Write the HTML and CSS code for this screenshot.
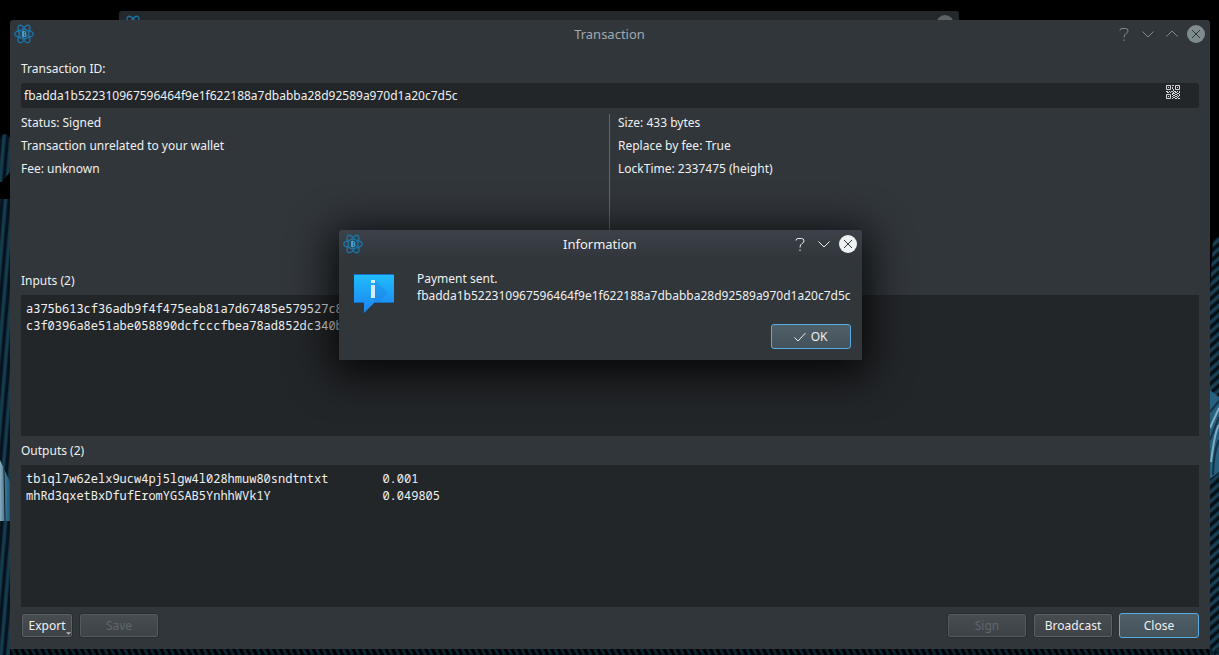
FILE: index.html
```html
<!DOCTYPE html>
<html lang="en">
<head>
<meta charset="utf-8">
<title>Transaction</title>
<link rel="stylesheet" href="styles.css">
</head>
<body>
<svg class="defs" width="0" height="0" aria-hidden="true">
  <defs>
    <pattern id="stripe-l" width="7" height="60" patternUnits="userSpaceOnUse" patternTransform="rotate(5)"><rect width="7" height="60" fill="#06131c"/><rect width="4" height="60" fill="#10303f"/><rect x="1" width="2" height="60" fill="#153c50"/></pattern>
    <pattern id="stripe-r" width="6" height="7" patternUnits="userSpaceOnUse" patternTransform="rotate(-42)"><rect width="6" height="7" fill="#050f16"/><rect width="6" height="4" fill="#12303f"/><rect y="1" width="6" height="2" fill="#194257"/></pattern>
    <pattern id="stripe-b" width="6" height="7" patternUnits="userSpaceOnUse" patternTransform="rotate(-25)"><rect width="3" height="7" fill="#0a2431"/></pattern>
    <linearGradient id="glow" x1="0" x2="1" y1="0" y2="0"><stop offset="0" stop-color="#8aa9b8"/><stop offset=".5" stop-color="#3c7797"/><stop offset="1" stop-color="#1f5672"/></linearGradient>
    <linearGradient id="bubble" x1="0" x2="0" y1="0" y2="1"><stop offset="0" stop-color="#21bdfb"/><stop offset="1" stop-color="#1b82f1"/></linearGradient>
    <symbol id="atom" viewBox="0 0 20 20">
      <g fill="none" stroke="#1b76a8" stroke-width="1.300">
        <ellipse cx="10" cy="10" rx="9.300" ry="4"/>
        <ellipse cx="10" cy="10" rx="9.800" ry="4" transform="rotate(60 10 10)"/>
        <ellipse cx="10" cy="10" rx="9.800" ry="4" transform="rotate(120 10 10)"/>
      </g>
      <circle cx="10" cy="10" r="4.800" fill="#28465a" stroke="#1b76a8"/>
      <path d="M8.500 7.500v5h2q1.500 0 1.500-1.300t-1.500-1.200h-2h1.800q1.400 0 1.400-1.200t-1.400-1.300zM9.500 6.500v7" fill="none" stroke="#4a9cc8" stroke-width="1.100"/>
    </symbol>
  </defs>
</svg>
<div class="desktop">
  <svg class="wallpaper" aria-hidden="true">
    <svg x="0" width="10" height="100%">
      <path d="M0 138Q5 130 10 138V172L2 182H0zM0 199H10V800H0z" fill="url(#stripe-l)"/>
      <path d="M0 460L10 482V521H0z" fill="url(#glow)"/><path d="M4 468L5 521" stroke="#0a1c28" stroke-width="1"/>
    </svg>
    <svg x="100%" width="10" height="100%" overflow="visible">
      <g transform="translate(-9 0)">
        <path d="M3 240L9 236V800H0V290z" fill="url(#stripe-r)"/>
        <path d="M0 390L9 397V472L0 479z" fill="#28607f"/><path d="M1 462Q5 430 9 425M0 428L9 408" stroke="#83abc0" stroke-width="2" fill="none"/><path d="M3 475Q4 450 9 440M0 440L9 417M0 412L9 401" stroke="#123549" stroke-width="2" fill="none"/>
      </g>
    </svg>
    <svg y="100%" width="100%" height="6" overflow="visible"><rect x="10" y="-6" width="100%" height="6" fill="url(#stripe-b)"/></svg>
  </svg>
  <div class="back-window" aria-hidden="true"><svg class="logo"><use href="#atom"/></svg><span class="back-close"></span></div>

  <main class="window">
    <header class="titlebar">
      <svg class="logo" aria-hidden="true"><use href="#atom"/></svg>
      <h1>Transaction</h1>
      <div class="controls">
        <button aria-label="Help"><svg viewBox="0 0 18 18"><path d="M5 5.500Q5 3.500 7 3.500H10.500Q13 3.500 13 6Q13 7.500 11 8.500Q9 9.500 9 12.500M9 14.500v1.500"/></svg></button>
        <button aria-label="Minimize"><svg viewBox="0 0 18 18"><path d="M3.500 6.500L9 12l5.500-5.500"/></svg></button>
        <button aria-label="Maximize"><svg viewBox="0 0 18 18"><path d="M3.500 11.500L9 6l5.500 5.500"/></svg></button>
        <button aria-label="Close window"><svg viewBox="0 0 18 18"><circle cx="9" cy="9" r="9"/><path class="cross" d="M5 5l8 8M13 5l-8 8"/></svg></button>
      </div>
    </header>
    <div class="content">
      <label for="txid">Transaction ID:</label>
      <div class="field">
        <input id="txid" type="text" readonly value="fbadda1b522310967596464f9e1f622188a7dbabba28d92589a970d1a20c7d5c">
        <button aria-label="Show QR code"><svg class="qr" viewBox="0 0 14 14"><path d="M.5 .5h4v4h-4zM9.500 .5h4v4h-4zM.5 9.500h4v4h-4z"/><path class="modules" d="M2 2h1v1h-1zM11 2h1v1h-1zM2 11h1v1h-1zM6 0h2v1h-2zM6 2h1v2h-1zM7 4h1v2h-1zM0 6h2v1h-2zM3 6h1v1h-1zM5 6h2v1h-2zM8 6h2v1h-2zM11 6h1v1h-1zM13 6h1v2h-1zM1 7h2v1h-2zM4 7h1v1h-1zM7 7h1v2h-1zM9 7h2v1h-2zM6 8h1v2h-1zM8 8h1v1h-1zM11 8h2v1h-2zM9 9h2v1h-2zM7 10h2v1h-2zM11 10h1v1h-1zM13 9h1v2h-1zM6 11h1v1h-1zM9 11h2v1h-2zM12 11h1v1h-1zM7 12h2v1h-2zM11 12h1v1h-1zM6 13h1v1h-1zM9 13h2v1h-2zM12 13h2v1h-2z"/></svg></button>
      </div>
      <div class="details">
        <div><p>Status: Signed</p><p>Transaction unrelated to your wallet</p><p>Fee: unknown</p></div>
        <div><p>Size: 433 bytes</p><p>Replace by fee: True</p><p>LockTime: 2337475 (height)</p></div>
      </div>
      <h2>Inputs (2)</h2>
      <div class="list">
        <p>a375b613cf36adb9f4f475eab81a7d67485e579527c8</p>
        <p>c3f0396a8e51abe058890dcfcccfbea78ad852dc340b</p>
      </div>
      <h2>Outputs (2)</h2>
      <div class="list">
        <table>
          <tr><td>tb1ql7w62elx9ucw4pj5lgw4l028hmuw80sndtntxt</td><td>0.001</td></tr>
          <tr><td>mhRd3qxetBxDfufEromYGSAB5YnhhWVk1Y</td><td>0.049805</td></tr>
        </table>
      </div>
      <footer class="actions">
        <button class="btn export">Export<svg viewBox="0 0 6 3" aria-hidden="true"><path d="M0 0h6L3 3z"/></svg></button>
        <button class="btn" disabled>Save</button>
        <button class="btn push" disabled>Sign</button>
        <button class="btn">Broadcast</button>
        <button class="btn primary">Close</button>
      </footer>
    </div>
  </main>

  <section class="window popup" role="dialog" aria-labelledby="info-title">
    <header class="titlebar">
      <svg class="logo" aria-hidden="true"><use href="#atom"/></svg>
      <h1 id="info-title">Information</h1>
      <div class="controls">
        <button aria-label="Help"><svg viewBox="0 0 18 18"><path d="M5 5.500Q5 3.500 7 3.500H10.500Q13 3.500 13 6Q13 7.500 11 8.500Q9 9.500 9 12.500M9 14.500v1.500"/></svg></button>
        <button aria-label="Minimize"><svg viewBox="0 0 18 18"><path d="M3.500 6.500L9 12l5.500-5.500"/></svg></button>
        <button aria-label="Close dialog"><svg viewBox="0 0 18 18"><circle cx="9" cy="9" r="9"/><path class="cross" d="M5 5l8 8M13 5l-8 8"/></svg></button>
      </div>
    </header>
    <div class="message">
      <svg class="bubble" viewBox="0 0 40 40" aria-hidden="true"><path d="M0 0h40v29H20L10 39V29H0z" fill="url(#bubble)"/><path d="M21 6L34 19L24 29L17 24z" fill="#1976dc" opacity=".3"/><path d="M0 28.500h10M20 28.500h20M0 .5h40" stroke="#1670c8"/><path d="M17 6h4v3h-4zM17 11h4v13h-4z" fill="#d5edff"/></svg>
      <p>Payment sent.<br>fbadda1b522310967596464f9e1f622188a7dbabba28d92589a970d1a20c7d5c</p>
    </div>
    <div class="answer"><button class="btn primary"><svg viewBox="0 0 12 10" aria-hidden="true"><path d="M.5 5.500L4 9l7.500-8"/></svg>OK</button></div>
  </section>
</div>
</body>
</html>
```
FILE: styles.css
```css
* { box-sizing: border-box; }
body { margin: 0; background: #000; color: #eff0f1; font: 12px/17px "Noto Sans", sans-serif; }
h1, h2, p { margin: 0; font-size: inherit; font-weight: 400; }
button { font: inherit; color: inherit; padding: 0; border: 0; background: none; }
.defs { position: absolute; }
.desktop { position: relative; min-height: 100vh; display: flex; padding: 20px 9px 6px 10px; overflow: hidden; }
.wallpaper { position: absolute; top: 0; left: 0; width: 100%; height: 100%; }
.back-window { position: absolute; top: 11px; left: 119px; width: 840px; height: 40px; padding: 4px; background: #25282b; border-radius: 3px 3px 0 0; display: flex; justify-content: space-between; }
.back-close { width: 18px; height: 18px; margin-right: 1px; border-radius: 50%; background: #5b6366; }
.logo { width: 20px; height: 20px; }
.window { position: relative; flex: 1; display: flex; flex-direction: column; background: #31363b; border-radius: 3px 3px 0 0; }
.titlebar { display: grid; grid-template-columns: 1fr auto 1fr; align-items: center; height: 28px; padding: 0 5px 0 4px; color: #7f8c8d; }
.titlebar h1 { font-size: 13px; color: #a1a9b1; }
.controls { display: flex; gap: 6px; justify-content: flex-end; }
.controls button, .controls svg { display: block; width: 18px; height: 18px; }
.controls path { fill: none; stroke: currentColor; }
.controls circle { fill: currentColor; }
.controls .cross { stroke: #31363b; }
.content { flex: 1; display: flex; flex-direction: column; gap: 6px; padding: 12px 11px 11px; }
.field { display: flex; height: 25px; padding: 0 19px 0 3px; background: #232629; border-radius: 3px; }
.field input { flex: 1; min-width: 0; padding: 0; border: 0; background: none; color: inherit; font: inherit; }
.field button { align-self: flex-start; padding-top: 2px; }
.qr { display: block; width: 14px; height: 14px; fill: none; stroke: #d8d9da; }
.qr .modules { fill: #d8d9da; stroke: none; }
.details { flex: 15 0 0; display: grid; grid-template-columns: 1fr 1fr; }
.details p { margin-bottom: 6px; }
.details div + div { border-left: 1px solid #63686d; padding-left: 8px; margin-left: -1px; }
.list { flex: 13 0 0; padding: 5px; background: #232629; font-family: "Noto Sans Mono", "DejaVu Sans Mono", monospace; }
table { border-collapse: collapse; }
td { padding: 0 54px 0 0; }
.actions { display: flex; gap: 6px; }
.btn { display: flex; align-items: center; justify-content: center; gap: 5px; min-width: 80px; height: 25px; border: 1px solid #292d31; border-radius: 3px; background: linear-gradient(#484d52, #3d4247); box-shadow: inset 0 0 0 1px #5c6165; }
.btn:disabled { color: #5f666c; box-shadow: inset 0 0 0 1px #54595e; }
.btn.primary { border-color: #54aee4; background: linear-gradient(#4f5f68, #44525a); box-shadow: none; }
.btn svg { width: 12px; height: 10px; fill: none; stroke: currentColor; }
.export { position: relative; min-width: 52px; }
.export svg { position: absolute; right: 1px; bottom: 2px; width: 5px; height: 3px; fill: #bbb; stroke: none; }
.push { margin-left: auto; }
.popup { position: absolute; top: 230px; left: 339px; box-shadow: 0 8px 40px 8px #000c; }
.popup .titlebar { background: linear-gradient(#3d424a, #31363b); border-radius: 3px 3px 0 0; color: #eff0f1; }
.popup h1 { color: #eff0f1; }
.message { display: flex; gap: 23px; padding: 12px 11px 0 15px; }
.message p { line-height: 17px; }
.bubble { width: 40px; height: 40px; margin-top: 4px; }
.answer { display: flex; justify-content: flex-end; padding: 10px 11px 11px; }
```
